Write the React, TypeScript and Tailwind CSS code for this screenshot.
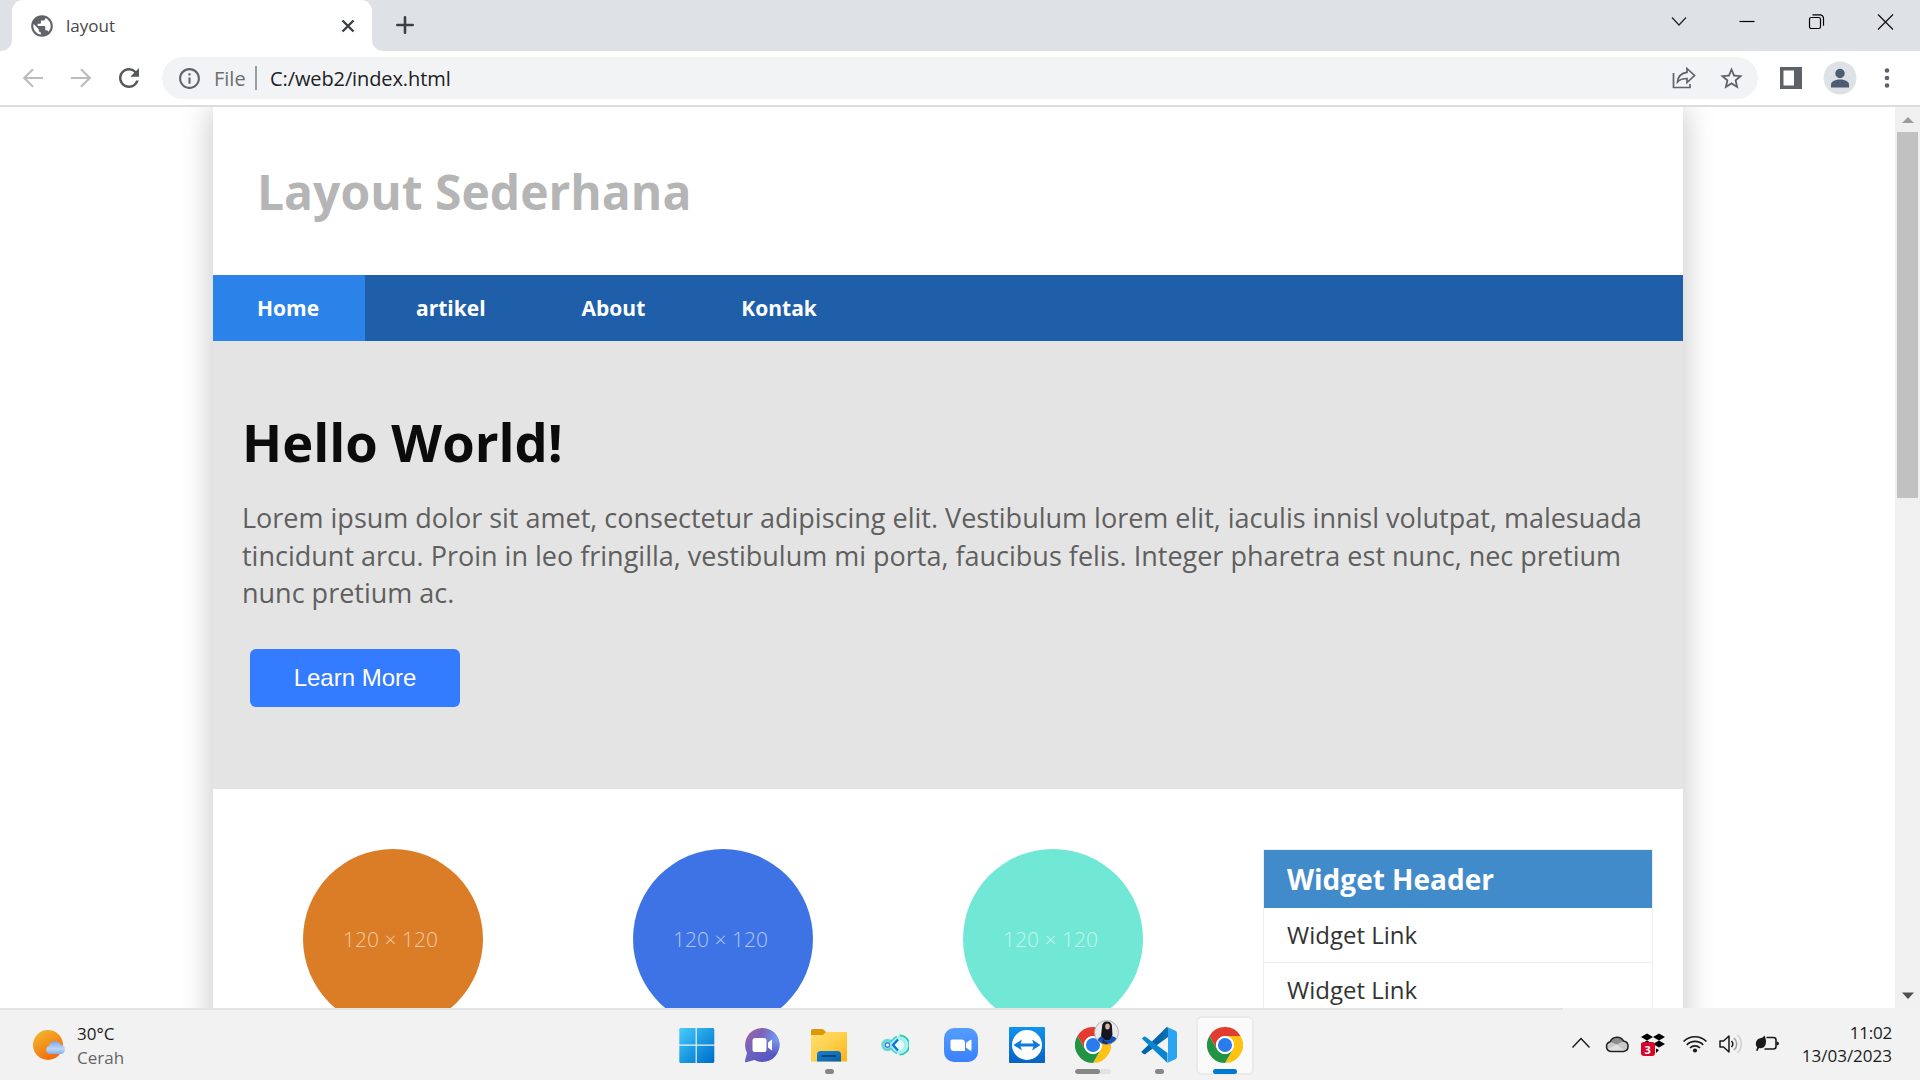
import React from "react";
import { MdPublic, MdStarBorder, MdRefresh, MdInfoOutline } from "react-icons/md";

const UI = "font-['Open_Sans','Noto_Sans',sans-serif]";

function TabStrip() {
  return (
    <div className="flex h-[51px] bg-[#dee1e6]">
      <div className="flex w-3 items-stretch bg-white">
        <div className="w-full rounded-br-[11px] bg-[#dee1e6]" />
      </div>
      <div className="bg-[#dee1e6]">
        <div className="flex h-full w-[360px] items-center rounded-t-[11px] bg-white pl-[17px]">
          <MdPublic className="size-[26px] text-[#5f6368]" />
          <span className="ml-[11px] w-[50px] text-[17px] text-[#45474a]">layout</span>
          <svg className="ml-[225px]" width="14" height="14" viewBox="0 0 14 14" stroke="#3c4043" strokeWidth="2.4">
            <path d="M1.5 1.5l11 11M12.500 1.500l-11 11" />
          </svg>
        </div>
      </div>
      <div className="flex w-3 bg-white">
        <div className="w-full rounded-bl-[11px] bg-[#dee1e6]" />
      </div>
      <svg className="ml-3 mt-4" width="18" height="18" viewBox="0 0 18 18" stroke="#3c4043" strokeWidth="2.6" strokeLinecap="round">
        <path d="M9 1.300v15.400M1.300 9h15.400" />
      </svg>
      <div className="ml-auto flex pr-[26px] pt-[13px]">
        <svg width="16" height="16" viewBox="0 0 16 16" fill="none" stroke="#222" strokeWidth="1.2" className="mr-[52px]">
          <path d="M1 4.500l7 7.500 7-7.500" />
        </svg>
        <svg width="16" height="16" viewBox="0 0 16 16" stroke="#000" strokeWidth="1.200" className="mr-[53px]">
          <path d="M0.500 8.500h15" />
        </svg>
        <svg width="17" height="17" viewBox="0 0 17 17" fill="none" stroke="#000" strokeWidth="1.200" className="mr-[52px]">
          <rect x="1.500" y="4.500" width="11" height="11" rx="1.800" />
          <path d="M4.500 1.800h7.500a3.500 3.500 0 0 1 3.500 3.500v7.400" />
        </svg>
        <svg width="17" height="17" viewBox="0 0 17 17" stroke="#111" strokeWidth="1.200">
          <path d="M1 1.500l15 15M16 1.500l-15 15" />
        </svg>
      </div>
    </div>
  );
}

function Toolbar() {
  return (
    <div className="flex h-14 items-center border-b-2 border-[#dcdcdc] bg-white">
      <svg className="ml-[22px]" width="22" height="20" viewBox="0 0 22 20" fill="none" stroke="#babcbe" strokeWidth="2.200">
        <path d="M21 10H2.500M11 1.200L2.200 10l8.800 8.800" />
      </svg>
      <svg className="ml-[26px]" width="22" height="20" viewBox="0 0 22 20" fill="none" stroke="#babcbe" strokeWidth="2.200">
        <path d="M1 10h18.500M11 1.200l8.800 8.800-8.800 8.800" />
      </svg>
      <MdRefresh className="ml-[22px] size-[30px] text-[#54585d]" />
      <div className="ml-[18px] flex h-[42px] w-[1596px] items-center rounded-full bg-[#f1f3f4] pl-[15px]">
        <MdInfoOutline className="size-[25px] text-[#5f6368]" />
        <span className="ml-3 w-[31px] pt-px text-[20px] text-[#6b6f73]">File</span>
        <div className="ml-[10px] h-6 w-[2px] bg-[#9a9da1]" />
        <span className="ml-[13px] whitespace-nowrap pt-px text-[20px] tracking-[-0.1px] text-[#202124]">C:/web2/index.html</span>
        <svg className="ml-auto" width="24" height="22" viewBox="0 0 24 22" fill="none" stroke="#5f6368" strokeWidth="1.700">
          <path d="M1.500 6v14.500h16.500v-3.500" />
          <path d="M15 1.500l7.500 7-7.500 7v-4c-4.500 0-7 .8-9.500 3.500.5-5.500 3.500-9 9.500-9.700z" />
        </svg>
        <MdStarBorder className="ml-[22px] mr-[13px] size-[27px] text-[#5f6368]" />
      </div>
      <svg className="ml-[22px]" width="22" height="22" viewBox="0 0 22 22">
        <path fill="#5f6368" fillRule="evenodd" d="M0 0h22v22H0zM3.500 3.500v15h10.500v-15z" />
      </svg>
      <svg className="ml-[21px]" width="34" height="34" viewBox="0 0 34 34">
        <circle cx="17" cy="17" r="16.500" fill="#dee1e6" />
        <circle cx="17" cy="12.500" r="4.700" fill="#4d5b73" />
        <path d="M8 26.500v-3c0-3.200 5-5 9-5s9 1.800 9 5v3z" fill="#4d5b73" />
      </svg>
      <svg className="ml-[27px]" width="6" height="22" viewBox="0 0 6 22" fill="#5f6368">
        <circle cx="3" cy="3.500" r="2.300" />
        <circle cx="3" cy="11" r="2.300" />
        <circle cx="3" cy="18.500" r="2.300" />
      </svg>
    </div>
  );
}

function Scrollbar() {
  return (
    <div className="flex w-[25px] flex-col items-center bg-[#f0f0f0]">
      <svg className="mt-[10px]" width="12" height="6" viewBox="0 0 12 6">
        <path d="M0 6L6 0l6 6z" fill="#9b9b9b" />
      </svg>
      <div className="mt-[9px] h-[366px] w-[21px] bg-[#c1c1c1]" />
      <svg className="mb-[9px] mt-auto" width="12" height="7" viewBox="0 0 12 7">
        <path d="M0 0.500L6 7l6-6.500z" fill="#505050" />
      </svg>
    </div>
  );
}

const circles = ["bg-[#da7d26]", "bg-[#3e73e6]", "bg-[#71e7d5]"];

function Page() {
  return (
    <div className="h-[1100px] w-[1470px] bg-white font-['Open_Sans',sans-serif] shadow-[0_0_30px_#c2c2c2]">
      <header className="flex h-[168px] items-center pl-[44px] pt-[2px]">
        <h1 className="text-[48px] font-bold leading-[66px] text-[#b5b5b5]">Layout Sederhana</h1>
      </header>
      <nav className="flex h-[66px] gap-[6px] bg-[#1f5faa] text-[21px] font-bold leading-[66px] text-white">
        <a className="w-[152px] bg-[#2b83ea] pl-[44px]">Home</a>
        <a className="px-[45px]">artikel</a>
        <a className="px-[45px]">About</a>
        <a className="px-[45px]">Kontak</a>
      </nav>
      <section className="h-[448px] bg-[#e4e4e4] pl-[29px] pt-[63px]">
        <h2 className="text-[52.5px] font-bold leading-[75px] text-[#0b0b0b]">Hello World!</h2>
        <div className="mt-[20px] whitespace-nowrap text-[27px] leading-[37.500px] text-[#5f5f5f]">
          <p>Lorem ipsum dolor sit amet, consectetur adipiscing elit. Vestibulum lorem elit, iaculis innisl volutpat, malesuada</p>
          <p>tincidunt arcu. Proin in leo fringilla, vestibulum mi porta, faucibus felis. Integer pharetra est nunc, nec pretium</p>
          <p>nunc pretium ac.</p>
        </div>
        <button className="ml-[8px] mt-[37px] h-[58px] w-[210px] rounded-[6px] bg-[#337bff] font-['Liberation_Sans',Arial,sans-serif] text-[24px] text-white">
          Learn More
        </button>
      </section>
      <section className="flex pl-[90px] pt-[60px]">
        <div className="flex gap-[150px]">
          {circles.map((c) => (
            <div key={c} className={`flex size-[180px] items-center justify-center rounded-full pr-[5px] pt-[2px] text-[21px] font-light text-white/60 ${c}`}>
              120 × 120
            </div>
          ))}
        </div>
        <aside className="ml-[120px] w-[390px] border border-[#eee]">
          <h3 className="h-[58px] bg-[#428bca] pl-[23px] text-[28px] font-bold leading-[59px] text-white">Widget Header</h3>
          <a className="block h-[55px] border-b border-[#eee] pl-[23px] text-[24px] leading-[54px] text-[#333]">Widget Link</a>
          <a className="block h-[55px] border-b border-[#eee] pl-[23px] text-[24px] leading-[54px] text-[#333]">Widget Link</a>
        </aside>
      </section>
    </div>
  );
}

function Chrome() {
  return (
    <svg className="shrink-0" width="36" height="36" viewBox="0 0 48 48">
      <path fill="#e33b2e" d="M3.215 12A24 24 0 0 1 44.785 12H24A12 12 0 0 0 13.608 30Z" />
      <path fill="#ffc112" d="M44.785 12A24 24 0 0 1 24 48L34.392 30A12 12 0 0 0 24 12Z" />
      <path fill="#229342" d="M24 48A24 24 0 0 1 3.215 12L13.608 30A12 12 0 0 0 34.392 30Z" />
      <circle cx="24" cy="24" r="12" fill="#fff" />
      <circle cx="24" cy="24" r="9.400" fill="#2a7bee" />
    </svg>
  );
}

function Windows() {
  return (
    <svg width="36" height="36" viewBox="0.7 0 36 36">
      <defs>
        <linearGradient id="win" gradientUnits="userSpaceOnUse" x1="0" y1="0" x2="34" y2="34">
          <stop offset="0" stopColor="#4dd0ff" />
          <stop offset="0.500" stopColor="#1f9fe3" />
          <stop offset="1" stopColor="#0072cf" />
        </linearGradient>
      </defs>
      <path fill="url(#win)" d="M2 1H17.300V17.500H1V2zM18.500 1H35l1 1V17.500H18.500zM1 18.700H17.300V36H2l-1-1zM18.500 18.700H36V35l-1 1H18.500z" />
    </svg>
  );
}

function Chat() {
  return (
    <svg width="36" height="36" viewBox="1 0 36 36">
      <defs>
        <linearGradient id="chat" x1="0" y1="0.200" x2="0.800" y2="1">
          <stop offset="0" stopColor="#9a62a5" />
          <stop offset="0.400" stopColor="#6f63bd" />
          <stop offset="1" stopColor="#4f51c4" />
        </linearGradient>
        <radialGradient id="chatGlow" cx="0.950" cy="0.300" r="0.500">
          <stop offset="0" stopColor="#7aa0f0" />
          <stop offset="1" stopColor="#7aa0f0" stopOpacity="0" />
        </radialGradient>
      </defs>
      <path fill="url(#chat)" d="M18.500 1a17 17 0 1 1-8 32L2 35.200c-.8 0-1.300-.6-1-1.400l2-8A17 17 0 0 1 18.500 1z" />
      <path fill="url(#chatGlow)" d="M18.500 1a17 17 0 1 1-8 32L2 35.200c-.8 0-1.300-.6-1-1.400l2-8A17 17 0 0 1 18.500 1z" />
      <rect x="8.500" y="11" width="14" height="14" rx="2.500" fill="#fff" />
      <path d="M24 15.500l4-3v11l-4-3z" fill="#fff" />
    </svg>
  );
}

function Folder() {
  return (
    <svg width="36" height="36" viewBox="0 0 36 36">
      <defs>
        <linearGradient id="fold" x1="0" y1="0" x2="1" y2="1">
          <stop offset="0" stopColor="#ffdf74" />
          <stop offset="0.500" stopColor="#ffcf49" />
          <stop offset="1" stopColor="#f9b115" />
        </linearGradient>
        <linearGradient id="foldBlue" x1="0" y1="0" x2="1" y2="1">
          <stop offset="0" stopColor="#1681d0" />
          <stop offset="1" stopColor="#0961aa" />
        </linearGradient>
      </defs>
      <path fill="#dc9b05" d="M0 3.500q0-1.500 1.500-1.500H11q1 0 2 1L15 5H34q2 0 2 2v6H0z" />
      <path fill="url(#fold)" d="M0 8h12l3-3H35q1 0 1 1V34.500H0z" />
      <path fill="url(#foldBlue)" d="M6 34.500V27.500q0-3.500 3.500-3.500h17Q30 24 30 27.500v7z" />
      <path d="M10.500 29H25" stroke="#0a4380" strokeWidth="2" />
    </svg>
  );
}

function LoopLogo() {
  return (
    <svg width="28" height="22" viewBox="0 0 28 22" fill="none">
      <circle cx="6.500" cy="11" r="4.700" stroke="#67d9d5" strokeWidth="3" />
      <circle cx="6.500" cy="11" r="2.300" stroke="#2a87dd" strokeWidth="1.400" />
      <circle cx="18" cy="11" r="7" fill="#e4fbfb" stroke="#a4f0ee" strokeWidth="3.500" />
      <path d="M18.500 1.300a9.700 9.700 0 0 1 0 19.400" stroke="#25cfae" strokeWidth="1.800" />
      <path d="M17 5.500L12 11l5 5.500" stroke="#156fdb" strokeWidth="2.400" />
      <path d="M9.500 8.500q2.500-4.500 6.500-6M9.500 13.500q2.500 4.500 6.500 6" stroke="#46cfd3" strokeWidth="1.500" />
    </svg>
  );
}

function Zoom() {
  return (
    <svg width="34" height="34" viewBox="0 0 34 34">
      <defs>
        <linearGradient id="zm" x1="0" y1="0" x2="0" y2="1">
          <stop offset="0" stopColor="#559dff" />
          <stop offset="1" stopColor="#3a80fb" />
        </linearGradient>
      </defs>
      <rect width="34" height="34" rx="10" fill="url(#zm)" />
      <path fill="#fff" d="M8 11.500h9.500q3.500 0 3.500 3.500v8h-11q-3.500 0-3.500-3.500V13q0-1.500 1.500-1.500zM22 15l4-3q1.500-.8 1.500.5v9.500q0 1.300-1.500.5l-4-3z" />
    </svg>
  );
}

function Viewer() {
  return (
    <svg width="36" height="36" viewBox="0 0 36 36">
      <defs>
        <linearGradient id="tv" x1="0" y1="0" x2="0" y2="1">
          <stop offset="0" stopColor="#0f93ee" />
          <stop offset="1" stopColor="#0862c6" />
        </linearGradient>
      </defs>
      <rect width="36" height="36" rx="0.800" fill="url(#tv)" />
      <circle cx="18" cy="18" r="15" fill="#fff" />
      <path fill="#0d7bdb" d="M4.500 18L13 12.500l-1.500 4h13l-1.500-4L31.500 18 23 23.500l1.500-4h-13l1.500 4z" />
    </svg>
  );
}

function Code() {
  return (
    <svg width="36" height="36" viewBox="0 0 36 36">
      <path d="M0.800 24.200L26 0v10.500L4.500 27q-1 .6-1.800-.1L.8 25.500q-.8-.7 0-1.300z" fill="#0065a9" />
      <path d="M0.800 11.600l2-1.800q.8-.6 1.700 0L26.500 26v10z" fill="#0b85cd" />
      <path d="M26 0l8.500 3.800Q36 4.500 36 6v24q0 1.500-1.500 2.200L26 36q1 0 1-2V2q0-2-1-2z" fill="#2ba5f0" />
      <path d="M26 0q1 0 1 2v8l-5 3.500 0-9.700z" fill="#0a70b5" />
    </svg>
  );
}

function Avatar() {
  return (
    <svg className="absolute -top-[7px] left-[19px]" width="25" height="25" viewBox="0 0 25 25">
      <defs>
        <clipPath id="av">
          <circle cx="12.500" cy="12.500" r="12" />
        </clipPath>
      </defs>
      <g clipPath="url(#av)">
        <rect width="25" height="25" fill="#e9e9ec" />
        <path d="M2 25l2-6q2-3 5-3h7q6 0 8 5v4z" fill="#1452b8" />
        <path d="M8 7q0-5.500 5-5.500t5 5.500l.5 8-3 5H11l-4-4z" fill="#15161f" />
        <ellipse cx="13.500" cy="6.500" rx="2.300" ry="3" fill="#d9b3a7" />
        <path d="M9 19l2 3 3 1-1 2H8z" fill="#2c2330" />
      </g>
      <circle cx="12.500" cy="12.500" r="12" fill="none" stroke="#a8a8a8" strokeWidth="0.800" />
    </svg>
  );
}

function TaskButton({ children, bar }: { children: React.ReactNode; bar?: React.ReactNode }) {
  return (
    <div className="flex w-[66px] flex-col items-center">
      <div className="flex h-[36px] items-center justify-center">{children}</div>
      <div className="mt-[6px] flex h-[5px]">{bar}</div>
    </div>
  );
}

const dot = <div className="h-[5px] w-[9px] rounded-full bg-[#868686]" />;

function Tray() {
  return (
    <div className="ml-auto flex items-start pt-[17px]">
      <svg className="mr-[15px] mt-[10px]" width="18" height="12" viewBox="0 0 18 12" fill="none" stroke="#1a1a1a" strokeWidth="1.500">
        <path d="M0.500 10.500L9 1.500l8.500 9" />
      </svg>
      <svg className="mr-3 mt-[8px]" width="24" height="18" viewBox="0 0 24 18">
        <path d="M6 16.500a5 5 0 0 1-.8-9.800A7.500 7.500 0 0 1 18.500 6a5.300 5.300 0 0 1 0 10.500z" fill="#c9c9c9" />
        <path d="M5.200 6.700A7.500 7.500 0 0 1 18.500 6L12 9.500z" fill="#8d8d8d" />
        <path d="M1.500 14.500L12 9.500l8.500 7H6z" fill="#e0e0e0" />
        <path d="M6 16.500a5 5 0 0 1-.8-9.800A7.500 7.500 0 0 1 18.500 6a5.300 5.300 0 0 1 0 10.500z" fill="none" stroke="#222" strokeWidth="1.500" />
      </svg>
      <div className="relative mr-[18px] mt-[6px] h-6 w-6">
        <svg width="24" height="24" viewBox="0 0 24 24">
          <path d="M6 0.500l6 3.500-6 3.500L0 4zM18 0.500L24 4l-6 3.500L12 4zM18 7.500l6 3.500-6 3.500L12 11zM6 7.500l6 3.500-6 3.500L0 11zM15 15.500l3 1.500-3 3z" fill="#000" />
        </svg>
        <div className="absolute left-0 top-[9px] flex h-[14px] w-[13.500px] items-center justify-center rounded-[3px] bg-[#d9042b] text-[11px] font-bold leading-none text-white">3</div>
      </div>
      <svg className="mr-3 mt-[8px]" width="24" height="18" viewBox="0 0 24 18" fill="none" stroke="#1a1a1a" strokeWidth="1.700">
        <path d="M0.600 6.500a16 16 0 0 1 22.800 0M3.800 9.900a11.500 11.500 0 0 1 16.400 0M7 13a7 7 0 0 1 10 0" />
        <circle cx="12" cy="15.500" r="2.100" fill="#1a1a1a" stroke="none" />
      </svg>
      <svg className="mr-3 mt-[7px]" width="24" height="20" viewBox="0 0 24 20" fill="none" stroke="#1a1a1a" strokeWidth="1.500">
        <path d="M1 7h3.500l5.500-5v16l-5.500-5H1z" strokeLinejoin="round" />
        <path d="M12.500 7a4.500 4.500 0 0 1 0 6" />
        <path d="M15 4a8 8 0 0 1 0 12" stroke="#9b9b9b" />
        <path d="M18.500 1a12.500 12.500 0 0 1 0 18" stroke="#cfcfcf" />
      </svg>
      <svg className="mr-[22px] mt-[7px]" width="25" height="20" viewBox="0 0 25 20">
        <path d="M11.500 3.500h7q2.500 0 2.500 2.500v6.500q0 2.500-2.500 2.500H9.500" fill="none" stroke="#1a1a1a" strokeWidth="1.600" />
        <path d="M21.500 7.500q2.500 0 2.500 2t-2.500 2z" fill="#1a1a1a" />
        <path d="M9.500 1.500c2 4.500 2 8.500 0 11-1.500 1.700-3.500 2-5.500 1.500L2.500 17 1 16.500l1.200-3C-1 9.500 2 5 4.500 4.500 7 4 8.500 3 9.500 1.500z" fill="#1a1a1a" />
      </svg>
      <div className="mr-[28px] flex w-[90px] flex-col items-end text-[17px] leading-[23px] text-[#1b1b1b]">
        <div className="-mt-[6px] tracking-[-0.200px]">11:02</div>
        <div className="whitespace-nowrap">13/03/2023</div>
      </div>
    </div>
  );
}

function Taskbar() {
  return (
    <div className="flex h-[72px] flex-col bg-[#f2f2f2]">
      <div className="h-[2px] w-[1563px] bg-[#e4e4e4]" />
      <div className="flex h-[70px]">
        <div className="flex w-[664px] pl-[33px] pt-[16px]">
          <svg className="mt-[3px]" width="34" height="32" viewBox="0 0 34 32">
            <defs>
              <linearGradient id="sun" x1="0" y1="0" x2="0.600" y2="1">
                <stop offset="0" stopColor="#f1bf31" />
                <stop offset="1" stopColor="#f4690c" />
              </linearGradient>
              <linearGradient id="cl" x1="0" y1="0" x2="0" y2="1">
                <stop offset="0" stopColor="#7fa6e8" />
                <stop offset="0.600" stopColor="#bcd7f8" />
                <stop offset="1" stopColor="#88ade8" />
              </linearGradient>
            </defs>
            <circle cx="15" cy="16" r="15" fill="url(#sun)" />
            <path d="M16.500 25a4.500 4.500 0 0 1-.5-8.500 6.500 6.500 0 0 1 12-.5 4.600 4.600 0 0 1 .5 9z" fill="url(#cl)" />
          </svg>
          <div className="ml-[10px] -mt-[4px] text-[17px] leading-[24px]">
            <div className="text-[#1b1b1b]">30°C</div>
            <div className="text-[#666]">Cerah</div>
          </div>
        </div>
        <div className="flex pt-[17px]">
          <TaskButton><Windows /></TaskButton>
          <TaskButton><Chat /></TaskButton>
          <TaskButton bar={dot}><Folder /></TaskButton>
          <TaskButton><LoopLogo /></TaskButton>
          <TaskButton><Zoom /></TaskButton>
          <TaskButton><Viewer /></TaskButton>
          <TaskButton
            bar={
              <div className="h-[5px] w-9 overflow-hidden rounded-full bg-[#e2e2e2]">
                <div className="h-full w-[25px] rounded-full bg-[#868686]" />
              </div>
            }
          >
            <div className="relative">
              <Chrome />
              <Avatar />
            </div>
          </TaskButton>
          <TaskButton bar={dot}><Code /></TaskButton>
          <div className="-mt-[11px] ml-[4px] flex h-[59px] w-[58px] flex-col items-center rounded-[6px] border-2 border-[#eaeaea] bg-[#fafafa] pt-[9px]">
            <Chrome />
            <div className="mt-[6px] h-[5px] w-6 shrink-0 rounded-full bg-[#0078d4]" />
          </div>
        </div>
        <Tray />
      </div>
    </div>
  );
}

export default function App() {
  return (
    <div className={`flex h-[1080px] w-[1920px] flex-col overflow-hidden bg-white ${UI}`}>
      <TabStrip />
      <Toolbar />
      <div className="flex h-[901px] overflow-hidden">
        <main className="h-[901px] flex-1 overflow-hidden pl-[213px]">
          <Page />
        </main>
        <Scrollbar />
      </div>
      <Taskbar />
    </div>
  );
}
